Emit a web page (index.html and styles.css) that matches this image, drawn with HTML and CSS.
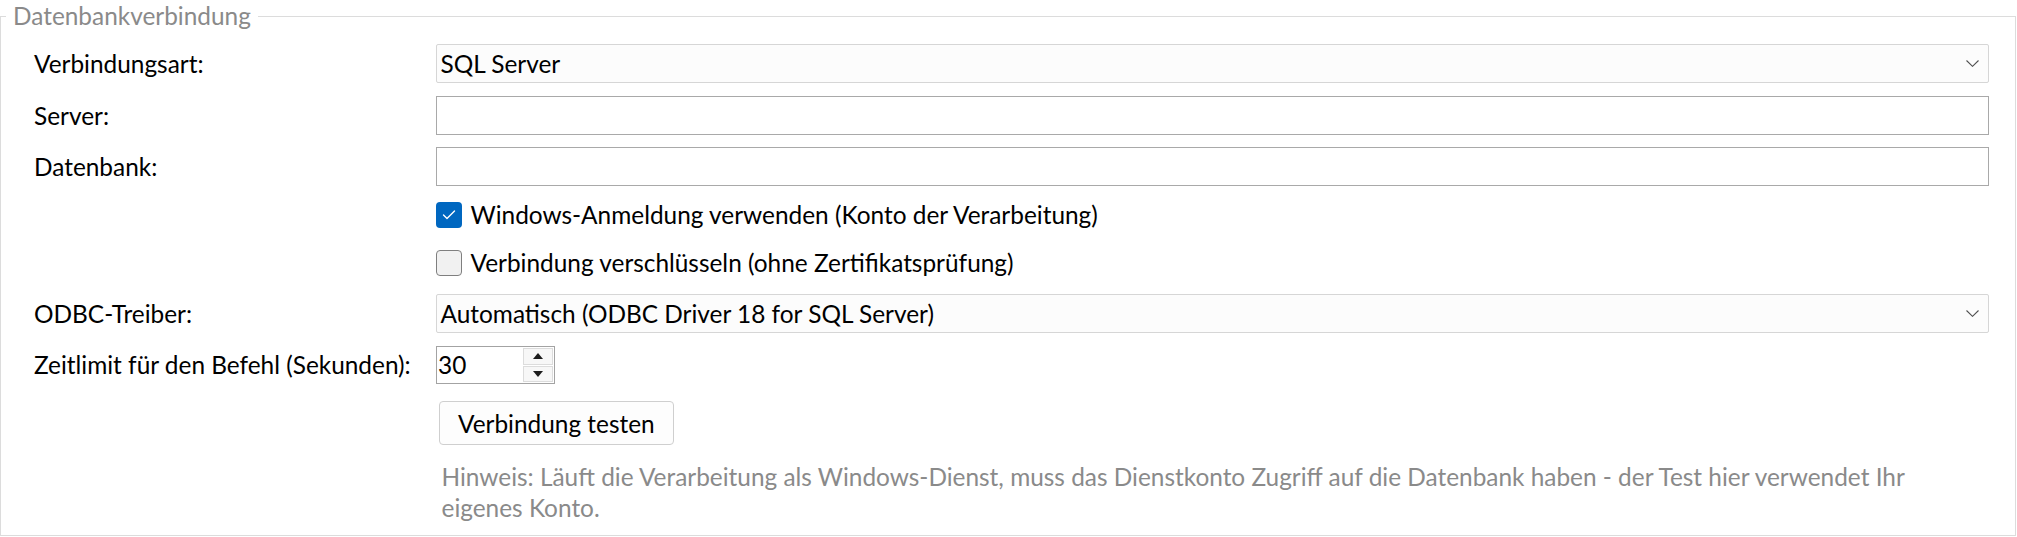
FILE: index.html
```html
<!DOCTYPE html>
<html lang="de">
<head>
    <meta charset="UTF-8">
    <title>Datenbankverbindung</title>
    <link rel="stylesheet" href="styles.css">
</head>
<body>
<fieldset class="group">
    <legend class="group-title">Datenbankverbindung</legend>

    <div class="form-row row-type">
        <label class="form-label">Verbindungsart:</label>
        <div class="combo">
            <span class="combo-text">SQL Server</span>
            <svg class="combo-arrow" width="13" height="7" viewBox="0 0 13 7"><polyline points="0.5,0.5 6.5,6.3 12.5,0.5" fill="none" stroke="#505050" stroke-width="1.1"/></svg>
        </div>
    </div>

    <div class="form-row row-server">
        <label class="form-label">Server:</label>
        <div class="textbox"></div>
    </div>

    <div class="form-row row-db">
        <label class="form-label">Datenbank:</label>
        <div class="textbox"></div>
    </div>

    <div class="form-row row-check-1">
        <span class="form-label"></span>
        <span class="check checked">
            <svg width="26" height="26" viewBox="0 0 26 26"><polyline points="7.5,13 11,16.5 18.5,9" fill="none" stroke="#fff" stroke-width="1.4" stroke-linecap="round" stroke-linejoin="round"/></svg>
        </span>
        <span class="check-text">Windows-Anmeldung verwenden (Konto der Verarbeitung)</span>
    </div>

    <div class="form-row row-check-2">
        <span class="form-label"></span>
        <span class="check"></span>
        <span class="check-text">Verbindung verschlüsseln (ohne Zertifikatsprüfung)</span>
    </div>

    <div class="form-row row-driver">
        <label class="form-label">ODBC-Treiber:</label>
        <div class="combo">
            <span class="combo-text">Automatisch (ODBC Driver 18 for SQL Server)</span>
            <svg class="combo-arrow" width="13" height="7" viewBox="0 0 13 7"><polyline points="0.5,0.5 6.5,6.3 12.5,0.5" fill="none" stroke="#505050" stroke-width="1.1"/></svg>
        </div>
    </div>

    <div class="form-row row-timeout">
        <label class="form-label">Zeitlimit für den Befehl (Sekunden):</label>
        <div class="spin">
            <span class="spin-value">30</span>
            <div class="spin-buttons">
                <span class="spin-btn"><i class="arrow-up"></i></span>
                <span class="spin-btn"><i class="arrow-down"></i></span>
            </div>
        </div>
    </div>

    <div class="form-row row-test">
        <span class="form-label"></span>
        <button class="btn" type="button">Verbindung testen</button>
    </div>

    <div class="form-row row-hint">
        <span class="form-label"></span>
        <p class="hint">Hinweis: Läuft die Verarbeitung als Windows-Dienst, muss das Dienstkonto Zugriff auf die Datenbank haben - der Test hier verwendet Ihr eigenes Konto.</p>
    </div>
</fieldset>
</body>
</html>
```

FILE: styles.css
```css
*{
    margin: 0;
    padding: 0;
    box-sizing: border-box;
}
body{
    background-color: #fff;
    font-family: "Lato", "Liberation Sans", sans-serif;
    font-size: 24.4px;
    line-height: 26px;
    color: #000;
}
.group{
    width: 2016px;
    height: 536px;
    border: 1px solid #dcdcdc;
    padding: 12px 26.5px 0 33px;
    min-width: 0;
}
.group-title{
    margin-left: -28px;
    padding: 0 7px;
    height: 32px;
    line-height: 32px;
    color: #8a8a8a;
}
.form-row{
    display: flex;
    align-items: center;
}
.form-label{
    width: 401.5px;
    flex: none;
}
.row-server{ margin-top: 13px; }
.row-db{ margin-top: 12px; }
.row-check-1{ margin-top: 16px; }
.row-check-2{ margin-top: 22px; }
.row-driver{ margin-top: 18px; }
.row-timeout{ margin-top: 13px; }
.row-test{ margin-top: 17px; }
.row-hint{ margin-top: 17px; }

/* Auswahlfelder */
.combo{
    flex: 1;
    height: 39px;
    display: flex;
    align-items: center;
    padding: 0 9px 0 4px;
    border: 1px solid #d6d6d6;
    border-radius: 2px;
    background-color: #fcfcfc;
}
.combo-text{
    flex: 1;
}
.combo-arrow{
    flex: none;
}

.textbox{
    flex: 1;
    height: 39px;
    border: 1px solid #a9a9a9;
    background-color: #fff;
}

/* Checkboxen */
.check{
    width: 26px;
    height: 26px;
    flex: none;
    border: 1.5px solid #7f7f7f;
    border-radius: 4px;
    background-color: #f1f1f1;
}
.check.checked{
    border: none;
    background-color: #0067c0;
}
.check svg{
    display: block;
}
.check-text{
    margin-left: 9px;
}

/* Zahlenfeld */
.spin{
    width: 119px;
    height: 38px;
    display: flex;
    border: 1px solid #a3a3a3;
    background-color: #fff;
}
.spin-value{
    flex: 1;
    padding-left: 1.5px;
    line-height: 36px;
}
.spin-buttons{
    width: 31px;
    display: flex;
    flex-direction: column;
    gap: 1px;
    padding: 1px 1px 1px 0;
}
.spin-btn{
    flex: 1;
    display: flex;
    align-items: center;
    justify-content: center;
    border: 1px solid #dcdcdc;
    background-color: #f7f7f7;
}
.arrow-up{
    border-left: 5px solid transparent;
    border-right: 5px solid transparent;
    border-bottom: 6px solid #1c1c1c;
}
.arrow-down{
    border-left: 5px solid transparent;
    border-right: 5px solid transparent;
    border-top: 6px solid #1c1c1c;
}

.btn{
    margin-left: 3.5px;
    height: 44px;
    padding: 0 18px;
    border: 1px solid #cfcfcf;
    border-radius: 4px;
    background-color: #fdfdfd;
    font-family: inherit;
    font-size: inherit;
    color: #000;
}

.hint{
    flex: 1;
    margin-left: 6px;
    line-height: 30.5px;
    color: #8a8a8a;
}
```
